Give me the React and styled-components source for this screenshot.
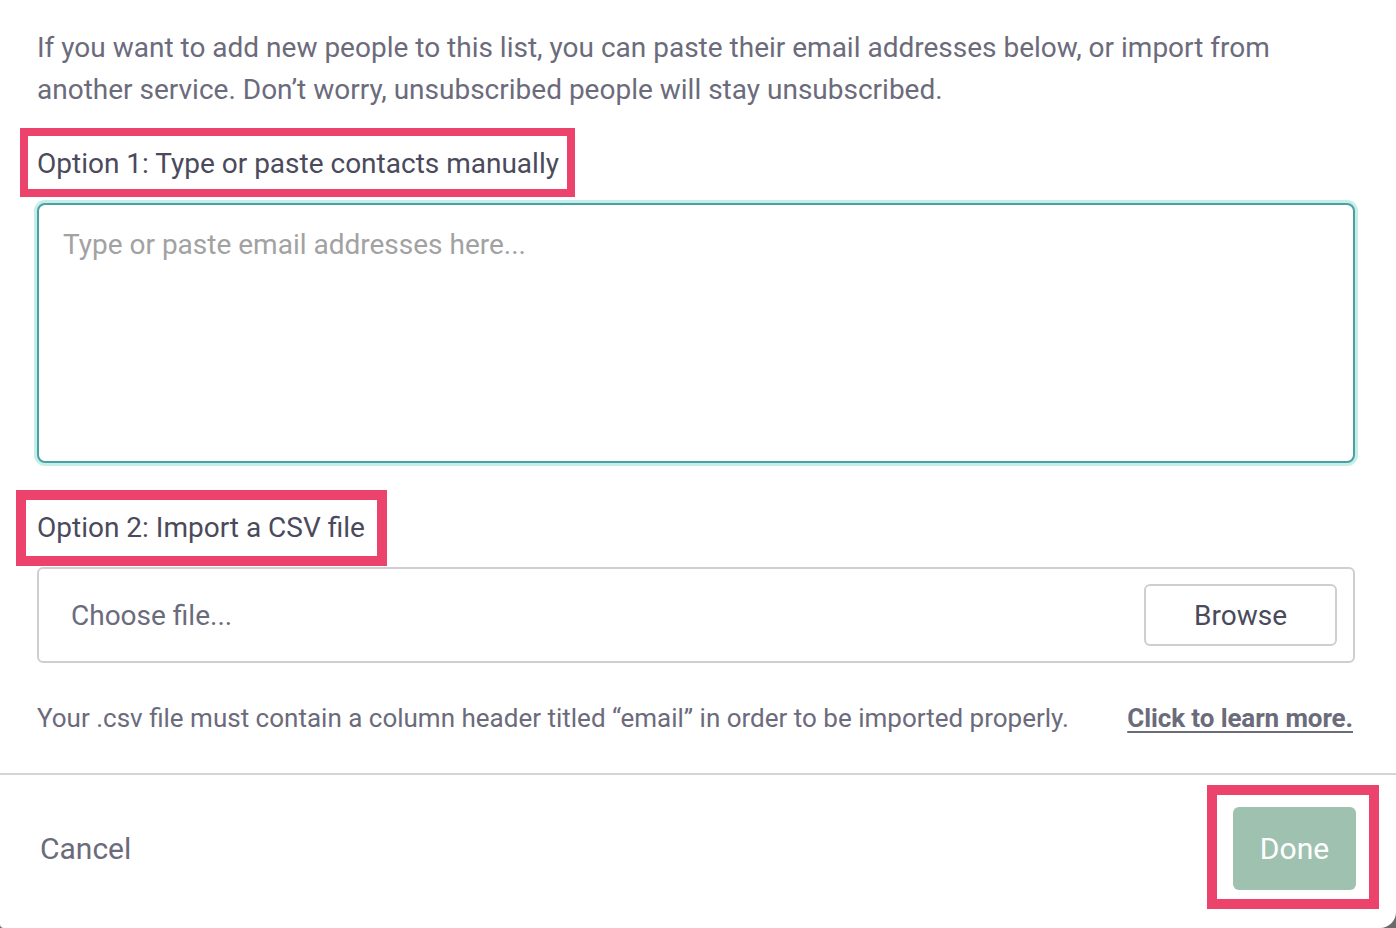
import React from "react";
import styled, { createGlobalStyle } from "styled-components";

const GlobalStyle = createGlobalStyle`
  html, body {
    margin: 0;
    padding: 0;
    background: #6b6b6b;
    font-family: Roboto, "Liberation Sans", Arial, sans-serif;
  }
  * { box-sizing: border-box; }
`;

const Dialog = styled.div`
  width: 1396px;
  height: 928px;
  background: #ffffff;
  border-radius: 0 0 16px 4px;
  display: flex;
  flex-direction: column;
  overflow: hidden;
`;

const Body = styled.div`
  padding: 27px 41px 0 37px;
  display: flex;
  flex-direction: column;
`;

const Intro = styled.p`
  margin: 0;
  font-size: 28px;
  line-height: 42px;
  color: #6b6b7b;
  width: 1300px;
`;

const Label = styled.div`
  align-self: flex-start;
  font-size: 28px;
  line-height: 36px;
  color: #4a4a5c;
  outline: ${({ stroke }) => stroke}px solid #eb436c;
  margin-left: -${({ padL }) => padL}px;
  padding: ${({ padT }) => padT}px ${({ padR }) => padR}px ${({ padB }) => padB}px ${({ padL }) => padL}px;
`;

const TextArea = styled.textarea`
  height: 260px;
  width: 100%;
  resize: none;
  border: 2px solid #4a9fa8;
  border-radius: 8px;
  box-shadow: 0 0 0 3px #c4eee6;
  padding: 22px 24px;
  font-family: inherit;
  font-size: 28px;
  line-height: 36px;
  color: #4a4a5c;
  outline: none;
  &::placeholder {
    color: #a2a2a2;
  }
`;

const FileBox = styled.div`
  height: 96px;
  border: 2px solid #cfcfd3;
  border-radius: 6px;
  display: flex;
  align-items: center;
  justify-content: space-between;
  padding: 0 16px 0 32px;
`;

const FileName = styled.span`
  font-size: 28px;
  color: #6b6b7b;
`;

const BrowseButton = styled.button`
  width: 193px;
  height: 62px;
  background: #fff;
  border: 2px solid #cfcfd3;
  border-radius: 6px;
  font-family: inherit;
  font-size: 28px;
  color: #4a4a5c;
`;

const HelpRow = styled.div`
  margin-top: 37px;
  display: flex;
  justify-content: space-between;
  align-items: center;
  line-height: 36px;
  font-size: 26px;
  color: #6b6b7b;
`;

const LearnLink = styled.a`
  font-weight: 700;
  color: #6b6b7b;
  text-decoration: underline;
  text-underline-offset: 4px;
  margin-right: 2px;
  letter-spacing: -0.1px;
`;

const Divider = styled.hr`
  margin: 37px 0 0;
  border: none;
  border-top: 2px solid #d4d4d4;
  width: 100%;
`;

const Footer = styled.div`
  flex: 1;
  display: flex;
  align-items: center;
  justify-content: space-between;
  padding: 0 27px 0 40px;
`;

const CancelButton = styled.button`
  background: none;
  border: none;
  padding: 0;
  margin-bottom: 7px;
  font-family: inherit;
  font-size: 30px;
  color: #6b6b7b;
`;

const DoneWrap = styled.div`
  outline: 10px solid #eb436c;
  padding: 12px 13px 9px 16px;
  margin-bottom: 9px;
`;

const DoneButton = styled.button`
  display: block;
  width: 123px;
  height: 83px;
  background: #9fc2b0;
  border: none;
  border-radius: 6px;
  color: #ffffff;
  font-family: inherit;
  font-size: 30px;
`;

const Spacer = styled.div`
  height: ${({ h }) => h}px;
`;

export default function App() {
  return (
    <>
      <GlobalStyle />
      <Dialog>
        <Body>
          <Intro>
            If you want to add new people to this list, you can paste their email addresses below, or import from another service. Don’t worry, unsubscribed people will stay unsubscribed.
          </Intro>
          <Spacer h={25} />
          <Label stroke={8} padL={9} padR={8} padT={10} padB={7}>
            Option 1: Type or paste contacts manually
          </Label>
          <Spacer h={14} />
          <TextArea placeholder="Type or paste email addresses here..." />
          <Spacer h={37} />
          <Label stroke={10} padL={11} padR={12} padT={10} padB={10}>
            Option 2: Import a CSV file
          </Label>
          <Spacer h={11} />
          <FileBox>
            <FileName>Choose file...</FileName>
            <BrowseButton>Browse</BrowseButton>
          </FileBox>
          <HelpRow>
            <span>Your .csv file must contain a column header titled “email” in order to be imported properly.</span>
            <LearnLink href="#">Click to learn more.</LearnLink>
          </HelpRow>
        </Body>
        <Divider />
        <Footer>
          <CancelButton>Cancel</CancelButton>
          <DoneWrap>
            <DoneButton>Done</DoneButton>
          </DoneWrap>
        </Footer>
      </Dialog>
    </>
  );
}
